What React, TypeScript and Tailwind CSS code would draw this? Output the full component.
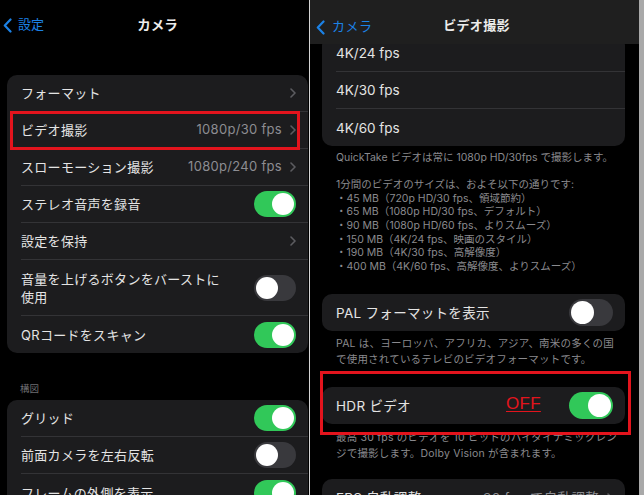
import type { ReactNode } from 'react';

function Chevron() {
  return (
    <svg width="6" height="10" viewBox="0 0 6 10" className="shrink-0">
      <path d="M1 1l4 4-4 4" fill="none" stroke="#5c5c60" strokeWidth="1.6" strokeLinecap="round" strokeLinejoin="round" />
    </svg>
  );
}

function BackChevron() {
  return (
    <svg width="9" height="15" viewBox="0 0 9 15" className="shrink-0">
      <path d="M7.5 1.5L1.8 7.5l5.7 6" fill="none" stroke="#1c82e6" strokeWidth="2.2" strokeLinecap="round" strokeLinejoin="round" />
    </svg>
  );
}

function Toggle({ on, big }: { on: boolean; big?: boolean }) {
  const size = big ? 'w-[44px] h-[27px]' : 'w-[42px] h-[26px]';
  const knob = big ? 'w-[23px] h-[23px]' : 'w-[22px] h-[22px]';
  return (
    <div
      className={`${size} shrink-0 rounded-full p-[2px] flex ${
        on ? 'bg-[#31c859] justify-end' : 'bg-[#39393d] justify-start'
      }`}
    >
      <div className={`${knob} rounded-full bg-white`} />
    </div>
  );
}

type RowProps = {
  children: ReactNode;
  value?: string;
  chevron?: boolean;
  toggle?: boolean | null;
  last?: boolean;
  tall?: boolean;
  big?: boolean;
  extra?: ReactNode;
};

function Row({ children, value, chevron, toggle, last, tall, big, extra }: RowProps) {
  return (
    <div className="relative pl-[14px]">
      <div
        className={`flex items-center gap-[8px] pr-[12px] ${tall ? 'h-[56px]' : 'h-[37px]'} ${
          last ? '' : 'border-b border-[#333336]'
        }`}
      >
        <div className="flex-1 whitespace-nowrap leading-[18px] text-[#e4e4e4]">{children}</div>
        {value && <span className="whitespace-nowrap text-[#8d8d92]">{value}</span>}
        {chevron && <Chevron />}
        {toggle !== undefined && toggle !== null && <Toggle on={toggle} big={big} />}
      </div>
      {extra}
    </div>
  );
}

function LeftPanel() {
  return (
    <div className="w-[309px] shrink-0 bg-black">
      <div className="relative h-[50px] flex items-center">
        <div className="flex items-center gap-[6px] pl-[3px] text-[#1c82e6] text-[13px]">
          <BackChevron />
          <span>設定</span>
        </div>
        <div className="absolute left-0 right-0 text-center text-[13.5px] font-semibold text-[#ececec] pl-[6px]">
          カメラ
        </div>
      </div>

      <div className="mt-[25px] ml-[7px] w-[301px] rounded-[10px] bg-[#1c1c1e] text-[13px] tracking-[0.3px]">
        <Row chevron>フォーマット</Row>
        <Row
          value="1080p/30 fps"
          chevron
          extra={
            <div className="absolute left-[3px] right-[8px] top-[-1px] bottom-[-1px] border-[3px] border-[#e3141d]" />
          }
        >
          ビデオ撮影
        </Row>
        <Row value="1080p/240 fps" chevron>
          スローモーション撮影
        </Row>
        <Row toggle={true}>ステレオ音声を録音</Row>
        <Row chevron>設定を保持</Row>
        <Row toggle={false} tall>
          音量を上げるボタンをバーストに
          <br />
          使用
        </Row>
        <Row toggle={true} last>
          QRコードをスキャン
        </Row>
      </div>

      <div className="mt-[30px] pl-[20px] text-[9.5px] leading-[12px] text-[#6e6e73]">構図</div>

      <div className="mt-[5px] ml-[7px] w-[301px] rounded-[10px] bg-[#1c1c1e] text-[13px] tracking-[0.3px]">
        <Row toggle={true}>グリッド</Row>
        <Row toggle={false}>前面カメラを左右反転</Row>
        <Row toggle={true} last>
          フレームの外側を表示
        </Row>
      </div>
    </div>
  );
}

function RightPanel() {
  return (
    <div className="w-[329px] shrink-0 bg-black flex flex-col overflow-hidden">
      <div className="relative z-10 h-[44px] shrink-0 bg-[#1f1f1f] flex items-center pt-[10px]">
        <div className="flex items-center gap-[7px] pl-[6px] text-[#1c82e6] text-[13px] tracking-[0.5px]">
          <BackChevron />
          <span>カメラ</span>
        </div>
        <div className="absolute left-0 right-0 top-[16px] text-center text-[13px] leading-[18px] font-semibold text-[#ececec] tracking-[0.3px] pl-[4px]">
          ビデオ撮影
        </div>
      </div>

      <div className="pl-[12px] pr-[14px]">
        <div className="-mt-[9px] rounded-[10px] bg-[#1c1c1e] text-[13.5px]">
          <Row>4K/24 fps</Row>
          <Row>4K/30 fps</Row>
          <Row last>4K/60 fps</Row>
        </div>

        <div className="mt-[5px] pl-[14px] whitespace-nowrap text-[10.5px] leading-[13.6px] text-[#8a8a8e]">
          <p>QuickTake ビデオは常に 1080p HD/30fps で撮影します。</p>
          <p className="mt-[13.6px]">1分間のビデオのサイズは、およそ以下の通りです:</p>
          <p>・45 MB（720p HD/30 fps、領域節約）</p>
          <p>・65 MB（1080p HD/30 fps、デフォルト）</p>
          <p>・90 MB（1080p HD/60 fps、よりスムーズ）</p>
          <p>・150 MB（4K/24 fps、映画のスタイル）</p>
          <p>・190 MB（4K/30 fps、高解像度）</p>
          <p>・400 MB（4K/60 fps、高解像度、よりスムーズ）</p>
        </div>

        <div className="mt-[21px] rounded-[10px] bg-[#1c1c1e] text-[13.5px] tracking-[0.3px]">
          <Row toggle={false} big last>
            PAL フォーマットを表示
          </Row>
        </div>

        <div className="mt-[5px] pl-[14px] whitespace-nowrap text-[10.5px] leading-[16px] text-[#8a8a8e] tracking-[0.2px]">
          <p>PAL は、ヨーロッパ、アフリカ、アジア、南米の多くの国</p>
          <p>で使用されているテレビのビデオフォーマットです。</p>
        </div>

        <div className="relative mt-[19px] rounded-[10px] bg-[#1c1c1e] text-[13.5px] tracking-[0.3px]">
          <Row toggle={true} big last>
            HDR ビデオ
          </Row>
          <span className="absolute left-[184px] top-[6px] text-[17px] leading-[22px] text-[#e3141d] underline underline-offset-[2px] font-['Liberation_Sans',Arial,sans-serif]">
            OFF
          </span>
          <div className="absolute left-[-2px] right-[-6px] top-[-16px] bottom-[-11px] border-[3px] border-[#e3141d]" />
        </div>

        <div className="mt-[6px] pl-[14px] whitespace-nowrap text-[10.5px] leading-[16px] text-[#8a8a8e] tracking-[0.2px]">
          <p>最高 30 fps のビデオを 10 ビットのハイダイナミックレン</p>
          <p>ジで撮影します。Dolby Vision が含まれます。</p>
        </div>

        <div className="mt-[17px] rounded-[10px] bg-[#1c1c1e] text-[13.5px] tracking-[0.3px]">
          <Row value="30 fps で自動調整" chevron last>
            FPS 自動調整
          </Row>
        </div>
      </div>
    </div>
  );
}

export default function App() {
  return (
    <div className="w-[644px] h-[495px] overflow-hidden flex bg-black font-[Inter,'Noto_Sans_CJK_JP',sans-serif]">
      <LeftPanel />
      <div className="w-px shrink-0 bg-[#d4d4d4]" />
      <RightPanel />
      <div className="w-[5px] shrink-0 bg-[#a9a9a9]" />
    </div>
  );
}
